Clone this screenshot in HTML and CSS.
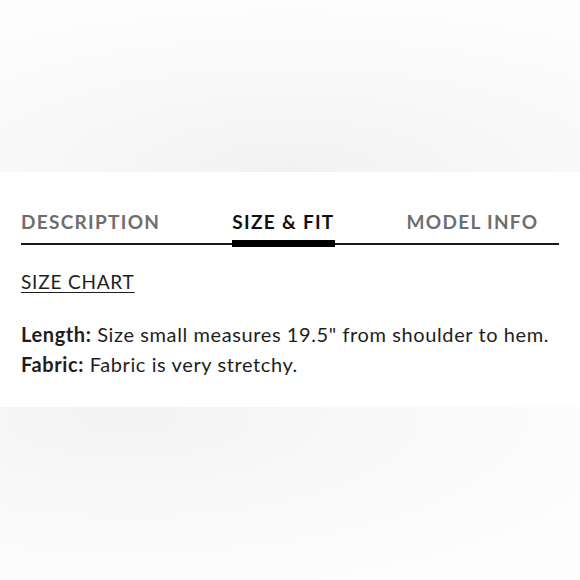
FILE: index.html
```html
<!DOCTYPE html>
<html>
<head>
	<meta charset="utf-8">
	<meta name="viewport" content="width=device-width, initial-scale=1">
	<title>size &amp; fit</title>

	<link rel="stylesheet" href="styles.css">
</head>
<body>

	<div class="page">
		<div class="shade shade-top"></div>

		<div class="panel">
			<div class="tabs">
				<div class="tab">DESCRIPTION</div>
				<div class="tab active">SIZE &amp; FIT</div>
				<div class="tab">MODEL INFO</div>
			</div>

			<a class="size-chart" href="#">SIZE CHART</a>

			<div class="details">
				<p><b>Length:</b> Size small measures 19.5" from shoulder to hem.</p>
				<p><b>Fabric:</b> Fabric is very stretchy.</p>
			</div>
		</div>

		<div class="shade shade-bottom"></div>
	</div>

</body>
</html>
```

FILE: styles.css
```css
*{
	margin: 0;
	padding: 0;
	box-sizing: border-box;
}
body{
	background: #fff;
	font-family: Lato, "Liberation Sans", sans-serif;
	color: #1e1e1e;
}
.page{
	display: flex;
	flex-direction: column;
	height: 580px;
}
.shade{
	flex: 0 0 172px;
}
.shade-top{
	background: radial-gradient(ellipse 90% 100% at 50% 100%, #f2f2f2 0%, #f7f7f7 40%, #fdfdfd 100%);
}
.shade-bottom{
	flex: 1;
	background: radial-gradient(ellipse 95% 110% at 22% 5%, #f3f3f3 0%, #f8f8f8 40%, #fdfdfd 100%);
}
.panel{
	background: #fff;
	padding: 38px 21px 28px 21px;
}
.tabs{
	display: flex;
	gap: 72px;
	border-bottom: 2px solid #1a1a1a;
}
.tab{
	position: relative;
	font-size: 19px;
	line-height: 24px;
	font-weight: 700;
	letter-spacing: 1.3px;
	color: #6e6e6e;
	padding-bottom: 9px;
}
.tab.active{
	color: #111;
}
.tab.active::after{
	content: "";
	position: absolute;
	left: 0;
	right: 0;
	bottom: -4px;
	height: 7px;
	background: #000;
}
.size-chart{
	display: inline-block;
	margin-top: 22px;
	font-size: 19px;
	line-height: 30px;
	letter-spacing: 0.8px;
	color: #1e1e1e;
	text-decoration: underline;
	text-underline-offset: 3px;
	text-decoration-thickness: 1px;
}
.details{
	margin-top: 22px;
}
.details p{
	font-size: 20px;
	line-height: 30px;
	letter-spacing: 0.6px;
}
.details b{
	font-weight: 700;
}
```
